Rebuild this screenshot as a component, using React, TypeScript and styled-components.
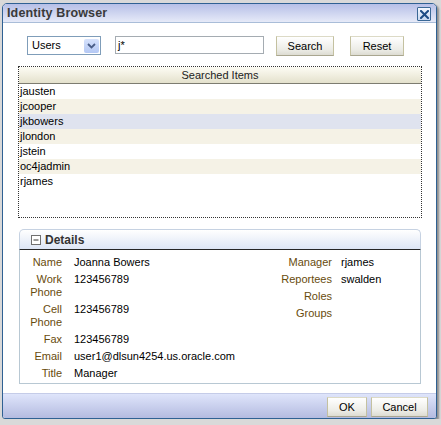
import React from "react"
import styled, { createGlobalStyle } from "styled-components"

const GlobalStyle = createGlobalStyle`
  html, body {
    margin: 0;
    padding: 0;
    background: #d9d9d9;
    font-family: "Liberation Sans", Tahoma, Arial, sans-serif;
    font-size: 11px;
    color: #000;
  }
`

const users = ["jausten", "jcooper", "jkbowers", "jlondon", "jstein", "oc4jadmin", "rjames"]
const selectedUser = "jkbowers"

const leftFields: [string, string][] = [
  ["Name", "Joanna Bowers"],
  ["Work Phone", "123456789"],
  ["Cell Phone", "123456789"],
  ["Fax", "123456789"],
  ["Email", "user1@dlsun4254.us.oracle.com"],
  ["Title", "Manager"],
]

const rightFields: [string, string][] = [
  ["Manager", "rjames"],
  ["Reportees", "swalden"],
  ["Roles", ""],
  ["Groups", ""],
]

const Window = styled.div`
  margin: 3px 0 0 2px;
  width: 433px;
  height: 414px;
  border: 1px solid #2f6193;
  border-radius: 5px 5px 3px 3px;
  background: #fff;
  box-shadow: 2px 2px 2px rgba(0, 0, 0, 0.35);
  display: flex;
  flex-direction: column;
  overflow: hidden;
`

const TitleBar = styled.div`
  height: 18px;
  flex: none;
  display: flex;
  align-items: center;
  justify-content: space-between;
  padding: 0 5px 0 4px;
  background: linear-gradient(#b6bfe7, #e6eaf8);
  border-bottom: 1px solid #a9bdd8;
`

const Title = styled.span`
  font-size: 12.5px;
  font-weight: bold;
  color: #3a3a3a;
  letter-spacing: 0.15px;
`

const CloseBox = styled.div`
  width: 12px;
  height: 12px;
  margin-top: 2px;
  border: 1px solid #3a6896;
  border-radius: 1px;
  background: linear-gradient(#f4f8ff, #c8d8f0);
  display: flex;
  align-items: center;
  justify-content: center;
`

const Content = styled.div`
  flex: none;
  height: 370px;
  box-sizing: border-box;
  padding: 13px 15px 0 15px;
  display: flex;
  flex-direction: column;
`

const SearchRow = styled.div`
  display: flex;
  align-items: flex-start;
  height: 20px;
  padding-left: 9px;
`

const Select = styled.div`
  width: 67px;
  height: 17px;
  border: 1px solid #7f9db9;
  display: flex;
  align-items: center;
  justify-content: space-between;
  padding: 0 1px 0 4px;
  line-height: 17px;
`

const ArrowButton = styled.div`
  width: 15px;
  height: 14px;
  border-radius: 2px;
  background: linear-gradient(#d6e2fc, #b4c8f4);
  display: flex;
  align-items: center;
  justify-content: center;
`

const TextInput = styled.div`
  width: 144px;
  height: 16px;
  margin-left: 14px;
  border: 1px solid #a5acb2;
  padding: 0 1px 0 2px;
  line-height: 16px;
`

const Button = styled.div<{ $width: number; $gap: number }>`
  width: ${(p) => p.$width}px;
  height: 18px;
  margin-left: ${(p) => p.$gap}px;
  border: 1px solid #c4c1a0;
  border-top-color: #dcdac6;
  border-bottom-color: #a9a690;
  background: linear-gradient(#ffffff, #ececE6 70%, #dddcd2);
  display: flex;
  align-items: center;
  justify-content: center;
  font-size: 11px;
  color: #000;
`

const Table = styled.div`
  margin-top: 10px;
  width: 402px;
  height: 150px;
  border: 1px dotted #333;
`

const TableHeader = styled.div`
  height: 16px;
  line-height: 16px;
  text-align: center;
  background: linear-gradient(#fdfcf4, #e4e1cc);
  border-bottom: 1px solid #7d7c70;
  color: #222;
`

const Row = styled.div<{ $tone: "plain" | "alt" | "selected" }>`
  height: 15px;
  line-height: 15px;
  padding-left: 1px;
  background: ${(p) =>
    p.$tone === "selected" ? "#dfe3ef" : p.$tone === "alt" ? "#f5f2e6" : "#fff"};
`

const Panel = styled.div`
  margin-top: 11px;
  margin-left: 1px;
  width: 402px;
`

const PanelHeader = styled.div`
  height: 19px;
  border: 1px solid #c6d2e2;
  border-bottom: 1px solid #262626;
  border-radius: 5px 5px 0 0;
  background: linear-gradient(#ffffff, #dde5f5);
  display: flex;
  align-items: center;
  padding-left: 11px;
  gap: 4px;
`

const PanelTitle = styled.span`
  font-size: 12px;
  font-weight: bold;
  color: #333;
`

const PanelBody = styled.div`
  border: 1px solid #b8c8d3;
  border-top: none;
  padding: 6px 0 3px;
  display: flex;
`

const FieldGrid = styled.div<{ $labelWidth: number; $gap: number; $width?: number }>`
  display: grid;
  grid-template-columns: ${(p) => p.$labelWidth}px 1fr;
  column-gap: ${(p) => p.$gap}px;
  row-gap: 4px;
  align-content: start;
  ${(p) => (p.$width ? `width: ${p.$width}px;` : "flex: 1;")}
  line-height: 13px;
`

const Label = styled.div`
  text-align: right;
  color: #684b0c;
`

const Value = styled.div`
  color: #000;
  white-space: nowrap;
`

const Footer = styled.div`
  flex: 1;
  border-top: 1px solid #c5cce8;
  background: linear-gradient(#dfe5fb, #b4bbe0);
  display: flex;
  justify-content: flex-end;
  align-items: flex-start;
  padding: 3px 8px 0 0;
`

const CloseIcon = () => (
  <svg width="9" height="9" viewBox="0 0 9 9">
    <path d="M1 1 L8 8 M8 1 L1 8" stroke="#1e4c85" strokeWidth="2" strokeLinecap="square" />
  </svg>
)

const Chevron = () => (
  <svg width="9" height="6" viewBox="0 0 9 6">
    <path d="M1 1 L4.5 4.5 L8 1" fill="none" stroke="#4a5e88" strokeWidth="1.8" />
  </svg>
)

const CollapseIcon = () => (
  <svg width="10" height="10" viewBox="0 0 10 10">
    <rect x="0.5" y="0.5" width="9" height="9" fill="#fff" stroke="#707070" />
    <path d="M2.5 5 H7.5" stroke="#333" strokeWidth="1" />
  </svg>
)

export default function App() {
  return (
    <>
      <GlobalStyle />
      <Window>
        <TitleBar>
          <Title>Identity Browser</Title>
          <CloseBox>
            <CloseIcon />
          </CloseBox>
        </TitleBar>

        <Content>
          <SearchRow>
            <Select>
              <span>Users</span>
              <ArrowButton>
                <Chevron />
              </ArrowButton>
            </Select>
            <TextInput>j*</TextInput>
            <Button $width={56} $gap={12}>Search</Button>
            <Button $width={52} $gap={16}>Reset</Button>
          </SearchRow>

          <Table>
            <TableHeader>Searched Items</TableHeader>
            {users.map((u, i) => (
              <Row
                key={u}
                $tone={u === selectedUser ? "selected" : i % 2 === 1 ? "alt" : "plain"}
              >
                {u}
              </Row>
            ))}
          </Table>

          <Panel>
            <PanelHeader>
              <CollapseIcon />
              <PanelTitle>Details</PanelTitle>
            </PanelHeader>
            <PanelBody>
              <FieldGrid $labelWidth={42} $gap={12}>
                {leftFields.map(([label, value]) => (
                  <React.Fragment key={label}>
                    <Label>{label}</Label>
                    <Value>{value}</Value>
                  </React.Fragment>
                ))}
              </FieldGrid>
              <FieldGrid $labelWidth={62} $gap={9} $width={150}>
                {rightFields.map(([label, value]) => (
                  <React.Fragment key={label}>
                    <Label>{label}</Label>
                    <Value>{value}</Value>
                  </React.Fragment>
                ))}
              </FieldGrid>
            </PanelBody>
          </Panel>
        </Content>

        <Footer>
          <Button $width={38} $gap={0}>OK</Button>
          <Button $width={55} $gap={4}>Cancel</Button>
        </Footer>
      </Window>
    </>
  )
}
